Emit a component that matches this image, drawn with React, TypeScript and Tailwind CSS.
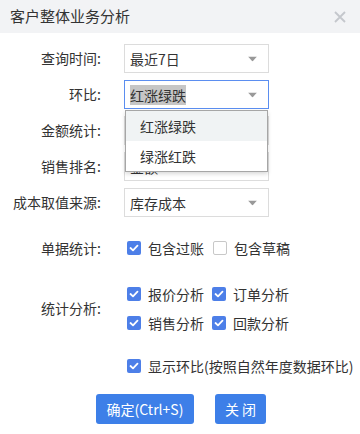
import React from "react";

const font = { fontFamily: '"Noto Sans CJK SC", "Noto Sans", sans-serif' };

function Arrow() {
  return (
    <svg width="9" height="5" viewBox="0 0 9 5" className="absolute right-[11px] top-1/2 -translate-y-1/2">
      <path d="M0 0 L9 0 L4.5 5 Z" fill="#999" />
    </svg>
  );
}

function Select({ value, active, highlight, children }: { value: string; active?: boolean; highlight?: boolean; children?: React.ReactNode }) {
  return (
    <div
      className={`relative w-[145px] h-[29px] border ${active ? "border-[#5b8ef0]" : "border-[#dcdcdc]"} bg-white flex items-center pl-[5px] text-[14px] text-[#333]`}
    >
      <span className={highlight ? "bg-[#c6c6c6] leading-[20px] px-0" : "leading-[20px]"}>{value}</span>
      <Arrow />
      {children}
    </div>
  );
}

function Check({ checked }: { checked: boolean }) {
  return checked ? (
    <span className="w-[14px] h-[14px] rounded-[2px] bg-[#4d7fe8] flex items-center justify-center shrink-0">
      <svg width="10" height="8" viewBox="0 0 10 8">
        <path d="M1.5 4 L4 6.3 L8.5 1.7" stroke="white" strokeWidth="1.8" fill="none" strokeLinecap="round" strokeLinejoin="round" />
      </svg>
    </span>
  ) : (
    <span className="w-[14px] h-[14px] rounded-[2px] border border-[#c8c8c8] bg-white shrink-0" />
  );
}

function CheckItem({ checked, label }: { checked: boolean; label: string }) {
  return (
    <div className="flex items-center gap-[7px] text-[14px] text-[#333]">
      <Check checked={checked} />
      <span>{label}</span>
    </div>
  );
}

function Row({ label, children, className = "" }: { label: string; children: React.ReactNode; className?: string }) {
  return (
    <div className={`flex items-center ${className}`}>
      <div className="w-[102px] text-right text-[14px] text-[#333] pr-[1px]">{label}</div>
      <div className="ml-[22px]">{children}</div>
    </div>
  );
}

export default function App() {
  return (
    <div className="w-[360px] h-[434px] bg-white overflow-hidden" style={font}>
      <div className="h-[33px] bg-[#f2f3f5] flex items-center justify-between pl-[10px] pr-[14px]">
        <span className="text-[15px] text-[#333]">客户整体业务分析</span>
        <svg width="12" height="12" viewBox="0 0 12 12">
          <path d="M1 1 L11 11 M11 1 L1 11" stroke="#c4c7cc" strokeWidth="1.8" />
        </svg>
      </div>
      <div className="pt-[11px]">
        <Row label="查询时间:" className="mb-[7px]">
          <Select value="最近7日" />
        </Row>
        <Row label="环比:" className="mb-[7px] relative z-10">
          <Select value="红涨绿跌" active highlight>
            <div className="absolute left-0 top-[29px] w-[143px] bg-white border border-[#a6a6a6] shadow-[0_2px_4px_rgba(0,0,0,0.15)] text-[14px] text-[#333]">
              <div className="h-[30px] flex items-center pl-[14px] bg-[#f0f3f4]">红涨绿跌</div>
              <div className="h-[30px] flex items-center pl-[14px]">绿涨红跌</div>
            </div>
          </Select>
        </Row>
        <Row label="金额统计:" className="mb-[7px]">
          <Select value="" />
        </Row>
        <Row label="销售排名:" className="mb-[7px]">
          <Select value="金额" />
        </Row>
        <Row label="成本取值来源:">
          <Select value="库存成本" />
        </Row>
        <Row label="单据统计:" className="mt-[19px] h-[24px]">
          <div className="flex items-center gap-[9px] ml-[3px]">
            <CheckItem checked label="包含过账" />
            <CheckItem checked={false} label="包含草稿" />
          </div>
        </Row>
        <Row label="统计分析:" className="mt-[23px]">
          <div className="flex flex-col gap-[7px] ml-[3px]">
            <div className="flex items-center gap-[8px] h-[22px]">
              <CheckItem checked label="报价分析" />
              <CheckItem checked label="订单分析" />
            </div>
            <div className="flex items-center gap-[8px] h-[22px]">
              <CheckItem checked label="销售分析" />
              <CheckItem checked label="回款分析" />
            </div>
          </div>
        </Row>
        <div className="mt-[21px] h-[22px] flex items-center pl-[127px]">
          <CheckItem checked label="显示环比(按照自然年度数据环比)" />
        </div>
        <div className="mt-[17px] flex justify-center gap-[21px] pl-[2px]">
          <button className="w-[98px] h-[30px] rounded-[3px] bg-[#3d7fe8] text-white text-[14px]">确定(Ctrl+S)</button>
          <button className="w-[51px] h-[30px] rounded-[3px] bg-[#3d7fe8] text-white text-[14px]">关 闭</button>
        </div>
      </div>
    </div>
  );
}
